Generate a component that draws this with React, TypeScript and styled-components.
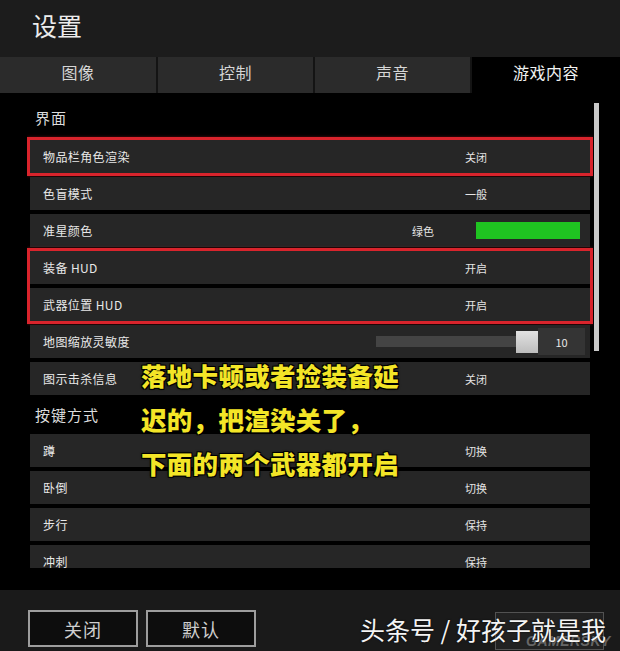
import styled, { createGlobalStyle } from 'styled-components';

const GlobalStyle = createGlobalStyle`
  html, body {
    margin: 0;
    padding: 0;
    background: #000;
  }
  body {
    font-family: "Noto Sans CJK SC", "Noto Sans", sans-serif;
  }
`;

type Setting =
  | { kind: 'text'; label: string; value: string }
  | { kind: 'color'; label: string; value: string; color: string }
  | { kind: 'slider'; label: string; value: number; percent: number };

const interfaceGroups: { highlight: boolean; items: Setting[] }[] = [
  { highlight: true, items: [{ kind: 'text', label: '物品栏角色渲染', value: '关闭' }] },
  {
    highlight: false,
    items: [
      { kind: 'text', label: '色盲模式', value: '一般' },
      { kind: 'color', label: '准星颜色', value: '绿色', color: '#1fc421' },
    ],
  },
  {
    highlight: true,
    items: [
      { kind: 'text', label: '装备 HUD', value: '开启' },
      { kind: 'text', label: '武器位置 HUD', value: '开启' },
    ],
  },
  {
    highlight: false,
    items: [
      { kind: 'slider', label: '地图缩放灵敏度', value: 10, percent: 100 },
      { kind: 'text', label: '图示击杀信息', value: '关闭' },
    ],
  },
];

const keyItems: Setting[] = [
  { kind: 'text', label: '蹲', value: '切换' },
  { kind: 'text', label: '卧倒', value: '切换' },
  { kind: 'text', label: '步行', value: '保持' },
  { kind: 'text', label: '冲刺', value: '保持' },
];

const tabs = ['图像', '控制', '声音', '游戏内容'];

function SettingRow({ item }: { item: Setting }) {
  return (
    <Row>
      <Label>{item.label}</Label>
      {item.kind === 'text' && <Value>{item.value}</Value>}
      {item.kind === 'color' && (
        <>
          <ColorName>{item.value}</ColorName>
          <Swatch $color={item.color} />
        </>
      )}
      {item.kind === 'slider' && (
        <Slider>
          <Track>
            <TrackFill style={{ width: `${item.percent}%` }} />
          </Track>
          <Thumb />
          <SliderValue>{item.value}</SliderValue>
        </Slider>
      )}
    </Row>
  );
}

export default function App() {
  return (
    <>
      <GlobalStyle />
      <Screen>
        <Header>
          <Title>设置</Title>
        </Header>

        <Tabs>
          {tabs.map((t, i) => (
            <Tab key={t} $active={i === tabs.length - 1}>
              {t}
            </Tab>
          ))}
        </Tabs>

        <Content>
          <List>
            <SectionTitle $first>界面</SectionTitle>
            {interfaceGroups.map((g, i) => (
              <Group key={i} $highlight={g.highlight}>
                {g.items.map((item) => (
                  <SettingRow key={item.label} item={item} />
                ))}
              </Group>
            ))}

            <SectionTitle>按键方式</SectionTitle>
            <Group>
              {keyItems.map((item) => (
                <SettingRow key={item.label} item={item} />
              ))}
            </Group>
          </List>
          <Scrollbar />

          <Caption>
            <div>落地卡顿或者捡装备延</div>
            <div>迟的，把渲染关了，</div>
            <div>下面的两个武器都开启</div>
          </Caption>
        </Content>

        <Footer>
          <FooterButton>关闭</FooterButton>
          <FooterButton>默认</FooterButton>
          <Watermark>头条号 / 好孩子就是我</Watermark>
          <StampBox />
          <Stamp>GAMERSKY</Stamp>
        </Footer>
      </Screen>
    </>
  );
}

const Screen = styled.div`
  width: 620px;
  height: 651px;
  display: flex;
  flex-direction: column;
  background: #000;
  overflow: hidden;
  position: relative;
`;

const Header = styled.div`
  height: 57px;
  flex-shrink: 0;
  background: #1c1c1c;
  display: flex;
  align-items: center;
  padding-left: 32px;
`;

const Title = styled.h1`
  margin: -6px 0 0 0;
  font-size: 25px;
  font-weight: 400;
  color: #ececec;
  letter-spacing: 0;
  line-height: 1;
`;

const Tabs = styled.div`
  height: 36px;
  flex-shrink: 0;
  display: grid;
  grid-template-columns: 156px 155px 155px 1fr;
  column-gap: 2px;
  background: #141414;
`;

const Tab = styled.div<{ $active?: boolean }>`
  display: flex;
  align-items: center;
  justify-content: center;
  font-size: 16px;
  color: ${(p) => (p.$active ? '#f2f2f2' : '#d6d6d6')};
  background: ${(p) => (p.$active ? '#000' : '#2b2b2b')};
  letter-spacing: 0.5px;
  padding-bottom: 6px;
  box-sizing: border-box;
`;

const Content = styled.div`
  flex: 1;
  position: relative;
  display: flex;
  align-items: flex-start;
  padding: 0 0 22px 27px;
  background: #000;
  overflow: hidden;
`;

const List = styled.div`
  width: 566px;
  height: 475px;
  padding: 0 3px;
  box-sizing: border-box;
  overflow: hidden;
  display: flex;
  flex-direction: column;
  gap: 4px;
`;

const SectionTitle = styled.div<{ $first?: boolean }>`
  height: ${(p) => (p.$first ? '43px' : '31px')};
  padding-top: ${(p) => (p.$first ? '6px' : '0')};
  box-sizing: border-box;
  display: flex;
  align-items: center;
  padding-left: 5px;
  font-size: 15px;
  color: #dcdcdc;
  letter-spacing: 1px;
  flex-shrink: 0;
`;

const Group = styled.div<{ $highlight?: boolean }>`
  display: flex;
  flex-direction: column;
  gap: 4px;
  flex-shrink: 0;
  outline: ${(p) => (p.$highlight ? '3px solid #d9242c' : 'none')};
  box-shadow: ${(p) => (p.$highlight ? '0 0 3px 3px rgba(217, 36, 44, 0.4)' : 'none')};
`;

const Row = styled.div`
  height: 33px;
  flex-shrink: 0;
  display: flex;
  align-items: center;
  padding-left: 13px;
  background: #262626;
  color: #e8e8e8;
`;

const Label = styled.div`
  flex: 1;
  font-size: 12px;
  letter-spacing: 0.4px;
`;

const Value = styled.div`
  width: 125px;
  font-size: 11px;
  color: #e4e4e4;
`;

const ColorName = styled.div`
  font-size: 11px;
  color: #e4e4e4;
  margin-right: 42px;
`;

const Swatch = styled.div<{ $color: string }>`
  width: 104px;
  height: 17px;
  background: ${(p) => p.$color};
  margin-right: 10px;
`;

const Slider = styled.div`
  display: flex;
  align-items: center;
  margin-right: 5px;
`;

const Track = styled.div`
  width: 140px;
  height: 11px;
  background: #3a3a3a;
`;

const TrackFill = styled.div`
  height: 100%;
  background: #444;
`;

const Thumb = styled.div`
  width: 22px;
  height: 22px;
  background: linear-gradient(#e2e2e2, #bdbdbd);
`;

const SliderValue = styled.div`
  width: 47px;
  height: 27px;
  background: #343434;
  display: flex;
  align-items: center;
  justify-content: center;
  font-size: 11px;
  color: #e8e8e8;
`;

const Scrollbar = styled.div`
  width: 5px;
  height: 248px;
  margin: 10px 0 0 1px;
  background: #c9c9c9;
  flex-shrink: 0;
`;

const Caption = styled.div`
  position: absolute;
  left: 141px;
  top: 260px;
  font-size: 25.5px;
  font-weight: 900;
  line-height: 44px;
  color: #f3e527;
  letter-spacing: 0.3px;
  text-shadow:
    -1px -1px 0 #000,
    1px -1px 0 #000,
    -1px 1px 0 #000,
    1px 1px 0 #000,
    0 0 3px #000;
`;

const Footer = styled.div`
  height: 61px;
  flex-shrink: 0;
  background: #1a1a1a;
  display: flex;
  align-items: center;
  gap: 8px;
  padding: 16px 0 0 28px;
  box-sizing: border-box;
  position: relative;
`;

const FooterButton = styled.button`
  width: 110px;
  height: 37px;
  border: 2px solid #9d9d9d;
  background: #0d0d0d;
  color: #cfcfcf;
  font-family: "Noto Sans CJK SC", sans-serif;
  font-size: 18px;
  letter-spacing: 1px;
  padding: 0;
  box-sizing: border-box;
`;

const Watermark = styled.div`
  margin-left: auto;
  margin-right: 14px;
  font-size: 25px;
  color: #f4f4f4;
  white-space: nowrap;
  text-shadow: 0 0 2px rgba(0, 0, 0, 0.8);
  position: relative;
  z-index: 1;
`;

const StampBox = styled.div`
  position: absolute;
  left: 495px;
  top: 22px;
  width: 107px;
  height: 36px;
  border: 1px solid rgba(255, 255, 255, 0.22);
  background: rgba(255, 255, 255, 0.04);
`;

const Stamp = styled.div`
  position: absolute;
  left: 526px;
  bottom: 2px;
  font-family: "Liberation Sans", sans-serif;
  font-size: 14px;
  font-weight: 700;
  font-style: italic;
  color: rgba(190, 190, 190, 0.45);
  letter-spacing: 0.5px;
`;
